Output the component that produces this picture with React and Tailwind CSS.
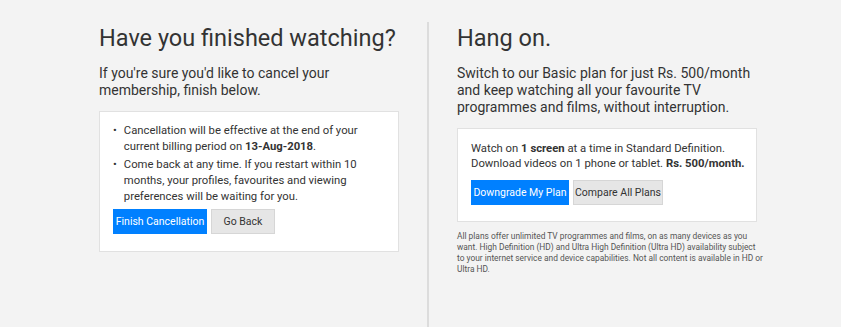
import React from 'react';

const font = { fontFamily: 'Roboto, "Liberation Sans", Arial, sans-serif' };

const CancelPanel = () => (
  <div className="w-[300px] pt-[1px]">
    <h1 className="text-[23.5px] leading-[30px] text-[#333]">Have you finished watching?</h1>
    <p className="mt-[12px] text-[14px] leading-[17px] text-[#333] pr-[60px]">
      If you're sure you'd like to cancel your membership, finish below.
    </p>
    <div className="mt-[12px] bg-white border border-[#e1e1e1] px-[13px] pt-[11px] pb-[17px]">
      <ul className="text-[11.3px] leading-[16px] text-[#333]">
        <li className="flex gap-[7px]">
          <span>•</span>
          <span>
            Cancellation will be effective at the end of your current billing period on{' '}
            <b>13-Aug-2018</b>.
          </span>
        </li>
        <li className="flex gap-[7px] mt-[2px]">
          <span>•</span>
          <span>
            Come back at any time. If you restart within 10 months, your profiles, favourites and viewing
            preferences will be waiting for you.
          </span>
        </li>
      </ul>
      <div className="flex gap-[4px] mt-[4px]">
        <button className="h-[25px] w-[94px] bg-[#0080ff] text-white text-[10.5px]">Finish Cancellation</button>
        <button className="h-[25px] w-[64px] bg-[#e6e6e6] border border-[#d6d6d6] text-[#333] text-[10.5px]">Go Back</button>
      </div>
    </div>
  </div>
);

const DowngradePanel = () => (
  <div className="w-[300px] pt-[1px]">
    <h1 className="text-[23.5px] leading-[30px] text-[#333]">Hang on.</h1>
    <p className="mt-[12px] text-[14px] leading-[17px] text-[#333]">
      Switch to our Basic plan for just Rs. 500/month and keep watching all your favourite TV programmes and
      films, without interruption.
    </p>
    <div className="mt-[12px] bg-white border border-[#e1e1e1] px-[13px] pt-[12px] pb-[16px]">
      <p className="text-[11.3px] leading-[15px] text-[#333] whitespace-nowrap">
        Watch on <b>1 screen</b> at a time in Standard Definition.
        <br />
        Download videos on 1 phone or tablet. <b>Rs. 500/month.</b>
      </p>
      <div className="flex gap-[4px] mt-[9px]">
        <button className="h-[25px] w-[98px] bg-[#0080ff] text-white text-[10.5px]">Downgrade My Plan</button>
        <button className="h-[25px] w-[90px] bg-[#e6e6e6] border border-[#d6d6d6] text-[#333] text-[10.5px]">Compare All Plans</button>
      </div>
    </div>
    <p className="mt-[9px] text-[8.4px] leading-[11px] text-[#555] whitespace-nowrap">
      All plans offer unlimited TV programmes and films, on as many devices as you
      <br />
      want. High Definition (HD) and Ultra High Definition (Ultra HD) availability subject
      <br />
      to your internet service and device capabilities. Not all content is available in HD or
      <br />
      Ultra HD.
    </p>
  </div>
);

export default function App() {
  return (
    <div className="w-[841px] h-[327px] bg-[#f3f3f3] overflow-hidden" style={font}>
      <div className="flex pl-[99px] pt-[22px] h-full">
        <CancelPanel />
        <div className="mx-[28px] w-[2px] bg-[#dcdcdc]" />
        <DowngradePanel />
      </div>
    </div>
  );
}
